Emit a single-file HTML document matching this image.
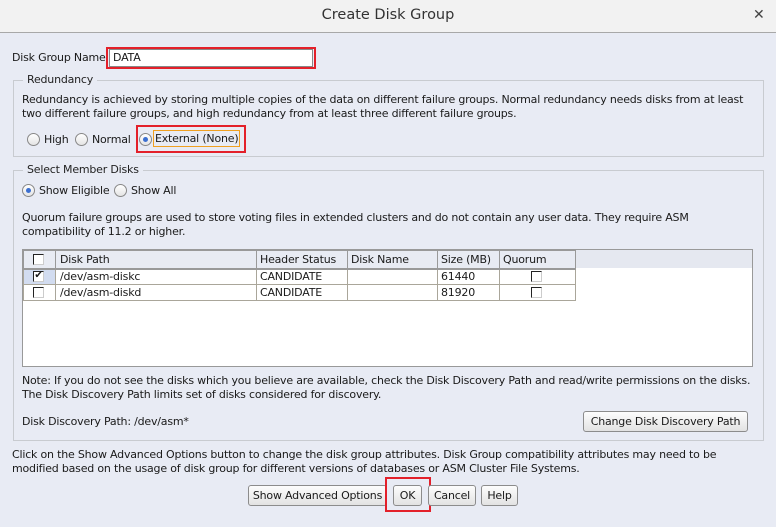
<!DOCTYPE html>
<html><head><meta charset="utf-8"><style>
*{box-sizing:border-box;margin:0;padding:0}
body{width:776px;height:527px;background:#e8ebf4;font-family:"DejaVu Sans","Liberation Sans",sans-serif;font-size:11px;letter-spacing:-0.2px;color:#1a1a1a;position:relative;overflow:hidden}
.a{position:absolute;white-space:nowrap}
.fs{position:absolute;border:1px solid #c8cbd0}
.lg{position:absolute;background:#e8ebf4;padding:0 4px;color:#222}
.rad{position:absolute;width:13px;height:13px;border-radius:50%;border:1px solid #888;background:linear-gradient(#fff,#e4e4e4)}
.rad.on::after{content:"";position:absolute;left:3px;top:3px;width:5px;height:5px;border-radius:50%;background:#3b6fd0}
.btn{position:absolute;height:21px;border:1px solid #8c8c8c;border-radius:3px;background:linear-gradient(#fdfdfd,#e2e2e2);text-align:center;line-height:19px}
.cb{position:absolute;width:11px;height:11px;border-top:1px solid #222;border-left:1px solid #222;border-right:1px solid #ccc;border-bottom:1px solid #ccc;background:#fff}
table{border-collapse:collapse}
</style></head><body>
<div class="a" style="left:0;top:0;width:776px;height:33px;background:#f2f2f2;border-bottom:1px solid #a8a8a8"></div>
<div class="a" style="left:0;top:7px;width:776px;text-align:center;font-size:14.5px;letter-spacing:0;color:#333">Create Disk Group</div>
<div class="a" style="left:753px;top:7px;font-size:14px;color:#444">✕</div>

<div class="a" style="left:12px;top:51px">Disk Group Name</div>
<div class="a" style="left:106px;top:47px;width:210px;height:22px;border:2px solid #e3202a"></div>
<div class="a" style="left:109px;top:49px;width:204px;height:18px;background:#fff;border:1px solid #888;padding:1px 3px">DATA</div>

<div class="fs" style="left:13px;top:80px;width:751px;height:77px"></div>
<div class="lg" style="left:23px;top:73px">Redundancy</div>
<div class="a" style="left:22px;top:93px">Redundancy is achieved by storing multiple copies of the data on different failure groups. Normal redundancy needs disks from at least</div>
<div class="a" style="left:22px;top:107px">two different failure groups, and high redundancy from at least three different failure groups.</div>
<div class="rad" style="left:27px;top:133px"></div><div class="a" style="left:44px;top:133px">High</div>
<div class="rad" style="left:75px;top:133px"></div><div class="a" style="left:92px;top:133px">Normal</div>
<div class="a" style="left:136px;top:125px;width:110px;height:28px;border:2px solid #e3202a"></div>
<div class="rad on" style="left:139px;top:133px"></div>
<div class="a" style="left:153px;top:130px;border:1px solid #f0a020;padding:1px 1px;line-height:13px">External (None)</div>

<div class="fs" style="left:13px;top:170px;width:751px;height:271px"></div>
<div class="lg" style="left:23px;top:163px">Select Member Disks</div>
<div class="rad on" style="left:22px;top:184px"></div><div class="a" style="left:39px;top:184px">Show Eligible</div>
<div class="rad" style="left:114px;top:184px"></div><div class="a" style="left:131px;top:184px">Show All</div>
<div class="a" style="left:22px;top:211px">Quorum failure groups are used to store voting files in extended clusters and do not contain any user data. They require ASM</div>
<div class="a" style="left:22px;top:225px">compatibility of 11.2 or higher.</div>

<div class="a" style="left:22px;top:249px;width:731px;height:118px;background:#fff;border:1px solid #999"></div>
<div class="a" style="left:23px;top:250px;width:729px;height:18px;background:#e5e8f0"></div>
<table class="a" style="left:23px;top:250px">
<tr style="height:18px;background:#e8ebf3"><td style="width:32px;border:1px solid #999;border-bottom-width:2px"></td><td style="width:201px;border:1px solid #999;border-bottom-width:2px;padding-left:4px">Disk Path</td><td style="width:91px;border:1px solid #999;border-bottom-width:2px;padding-left:3px">Header Status</td><td style="width:90px;border:1px solid #999;border-bottom-width:2px;padding-left:3px">Disk Name</td><td style="width:62px;border:1px solid #999;border-bottom-width:2px;padding-left:3px">Size (MB)</td><td style="width:76px;border:1px solid #999;border-bottom-width:2px;padding-left:3px">Quorum</td></tr>
<tr style="height:16px"><td style="border:1px solid #aaa69a;background:#d2dcf0"></td><td style="border:1px solid #aaa69a;padding-left:4px">/dev/asm-diskc</td><td style="border:1px solid #aaa69a;padding-left:3px">CANDIDATE</td><td style="border:1px solid #aaa69a"></td><td style="border:1px solid #aaa69a;padding-left:3px">61440</td><td style="border:1px solid #aaa69a"></td></tr>
<tr style="height:16px"><td style="border:1px solid #aaa69a"></td><td style="border:1px solid #aaa69a;padding-left:4px">/dev/asm-diskd</td><td style="border:1px solid #aaa69a;padding-left:3px">CANDIDATE</td><td style="border:1px solid #aaa69a"></td><td style="border:1px solid #aaa69a;padding-left:3px">81920</td><td style="border:1px solid #aaa69a"></td></tr>
</table>
<div class="cb" style="left:33px;top:254px"></div>
<div class="cb" style="left:33px;top:271px;font-size:10px;line-height:8px;text-align:center">✔</div>
<div class="cb" style="left:33px;top:287px"></div>
<div class="cb" style="left:531px;top:271px"></div>
<div class="cb" style="left:531px;top:287px"></div>

<div class="a" style="left:22px;top:374px">Note: If you do not see the disks which you believe are available, check the Disk Discovery Path and read/write permissions on the disks.</div>
<div class="a" style="left:22px;top:388px">The Disk Discovery Path limits set of disks considered for discovery.</div>
<div class="a" style="left:22px;top:415px">Disk Discovery Path: /dev/asm*</div>
<div class="btn" style="left:583px;top:411px;width:165px">Change Disk Discovery Path</div>

<div class="a" style="left:12px;top:448px">Click on the Show Advanced Options button to change the disk group attributes. Disk Group compatibility attributes may need to be</div>
<div class="a" style="left:12px;top:462px">modified based on the usage of disk group for different versions of databases or ASM Cluster File Systems.</div>
<div class="btn" style="left:248px;top:485px;width:139px">Show Advanced Options</div>
<div class="btn" style="left:393px;top:485px;width:29px">OK</div>
<div class="a" style="left:385px;top:477px;width:46px;height:35px;border:2px solid #e3202a"></div>
<div class="btn" style="left:428px;top:485px;width:48px">Cancel</div>
<div class="btn" style="left:481px;top:485px;width:37px">Help</div>
</body></html>
